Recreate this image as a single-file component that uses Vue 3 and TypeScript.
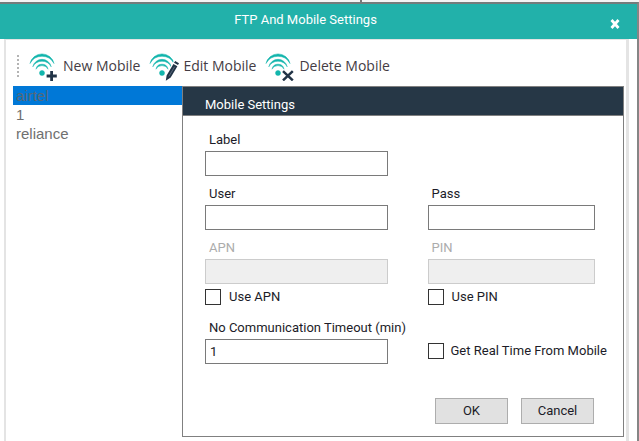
<script setup lang="ts">
import { ref } from 'vue'

type Badge = 'add' | 'edit' | 'remove'

const actions: { label: string; badge: Badge }[] = [
  { label: 'New Mobile', badge: 'add' },
  { label: 'Edit Mobile', badge: 'edit' },
  { label: 'Delete Mobile', badge: 'remove' },
]

const mobiles: string[] = ['airtel', '1', 'reliance']
const selected = ref<string>('airtel')

const label = ref('')
const user = ref('')
const pass = ref('')
const apn = ref('')
const pin = ref('')
const useApn = ref(false)
const usePin = ref(false)
const timeout = ref('1')
const realTime = ref(false)
</script>

<template>
  <div class="backdrop"><span class="tick"></span></div>
  <main class="window">
    <header class="titlebar">
      <h1>FTP And Mobile Settings</h1>
      <button class="close" type="button" aria-label="Close">
        <svg viewBox="0 0 10 10" width="10" height="10">
          <path d="M1.5 1L8.5 9M8.5 1L1.5 9" stroke="#fff" stroke-width="2.8" />
        </svg>
      </button>
    </header>

    <div class="panel">
      <nav class="toolbar">
        <svg class="grip" viewBox="0 0 2 24" width="2" height="24" aria-hidden="true">
          <path d="M1 1V24" stroke="#b4b4b4" stroke-width="2" stroke-dasharray="2 2" />
        </svg>
        <button v-for="a in actions" :key="a.badge" class="tool" type="button">
          <svg viewBox="0 0 30 30" width="30" height="30" fill="none" aria-hidden="true">
            <g fill="#12b5ac" stroke="#12b5ac" stroke-width=".5">
              <path d="M1 12.5A12.3 12.3 0 0 1 25 12.5A13.6 13.6 0 0 0 1 12.5Z" />
              <path d="M3.8 15.8A9.4 9.4 0 0 1 22.2 15.8A10.4 10.4 0 0 0 3.8 15.8Z" />
              <path d="M7 18.2A6.1 6.1 0 0 1 19 18.2A6.8 6.8 0 0 0 7 18.2Z" />
              <circle cx="13" cy="22" r="2.5" />
            </g>
            <path v-if="a.badge === 'add'" d="M22.6 20V30M17.6 25H27.8" stroke="#223447" stroke-width="2.8" />
            <g v-else-if="a.badge === 'edit'">
              <path d="M25.2 11.6L29.2 13.8L21.8 27L17.2 29.8L17.5 24.8Z" fill="#fff" stroke="#fff" stroke-width="2" />
              <path d="M24.4 13L28.4 15.2L21.7 26.6L16.8 29.8L17.6 24.4ZM25 11.8L26.2 10L30 12.2L29 14.1Z" fill="#223447" />
              <path d="M19.8 25.4L25.6 15.8" stroke="#718091" stroke-width=".7" />
            </g>
            <path v-else d="M18 20.2L27.8 29.4M27.8 20.2L18 29.4" stroke="#223447" stroke-width="2.5" />
          </svg>
          <span>{{ a.label }}</span>
        </button>
      </nav>

      <div class="content">
        <ul class="list" role="listbox" aria-label="Mobiles">
          <li
            v-for="m in mobiles"
            :key="m"
            role="option"
            :aria-selected="m === selected"
            :class="{ active: m === selected }"
            @click="selected = m"
          >{{ m }}</li>
        </ul>

        <section class="dialog" role="dialog" aria-labelledby="dialog-title">
          <h2 id="dialog-title">Mobile Settings</h2>
          <form class="form" @submit.prevent>
            <div class="field">
              <label for="label">Label</label>
              <input id="label" v-model="label" type="text" />
            </div>
            <div class="field second-row">
              <label for="user">User</label>
              <input id="user" v-model="user" type="text" />
            </div>
            <div class="field">
              <label for="pass">Pass</label>
              <input id="pass" v-model="pass" type="password" />
            </div>
            <div class="field">
              <label for="apn" :class="{ off: !useApn }">APN</label>
              <input id="apn" v-model="apn" type="text" :disabled="!useApn" />
              <label class="check"><input v-model="useApn" type="checkbox" />Use APN</label>
            </div>
            <div class="field">
              <label for="pin" :class="{ off: !usePin }">PIN</label>
              <input id="pin" v-model="pin" type="text" :disabled="!usePin" />
              <label class="check"><input v-model="usePin" type="checkbox" />Use PIN</label>
            </div>
            <div class="field timeout">
              <label for="timeout">No Communication Timeout (min)</label>
              <input id="timeout" v-model="timeout" type="text" />
            </div>
            <label class="check realtime"><input v-model="realTime" type="checkbox" />Get Real Time From Mobile</label>
            <div class="buttons">
              <button type="submit">OK</button>
              <button type="button">Cancel</button>
            </div>
          </form>
        </section>
      </div>
    </div>
  </main>
</template>

<style>
body {
  margin: 0;
  background: #fff;
}
#app {
  display: flex;
  flex-direction: column;
  height: 100vh;
  overflow: hidden;
}
</style>

<style scoped>
* {
  box-sizing: border-box;
}
h1,
h2,
ul {
  margin: 0;
  padding: 0;
  font-weight: 400;
}
button,
input {
  font: inherit;
  color: inherit;
  margin: 0;
}
.backdrop {
  display: flex;
  justify-content: center;
  flex: none;
  height: 2px;
  background: #f4f4f4;
}
.tick {
  width: 2px;
  margin-left: 82px;
  background: #777;
}
.window {
  flex: 1;
  display: flex;
  flex-direction: column;
  min-height: 0;
  border-top: 2px solid #747c7c;
  border-right: 2px solid #858585;
  font: 13px/18px Roboto, "Liberation Sans", sans-serif;
  color: #1c1c28;
}
.titlebar {
  display: grid;
  grid-template-columns: 1fr 24px;
  flex: none;
  height: 35px;
  padding: 0 10px 0 8px;
  background: #22b1aa;
  color: #fff;
}
.titlebar h1 {
  padding-top: 7px;
  font-size: 13px;
  line-height: 18px;
  text-align: center;
}
.close {
  display: flex;
  align-items: center;
  justify-content: center;
  height: 40px;
  padding: 0;
  border: 0;
  background: none;
}
.panel {
  flex: 1;
  display: flex;
  flex-direction: column;
  min-height: 0;
  margin: 0 8px 0 4px;
  border: solid #e4e4e4;
  border-width: 1px 3px 0 2px;
}
.toolbar {
  display: flex;
  align-items: center;
  flex: none;
  height: 46px;
  padding: 5px 0 0 11px;
  font-family: "Open Sans", "Noto Sans", sans-serif;
  font-size: 14px;
  color: #443c44;
}
.grip {
  margin-right: 10px;
}
.tool {
  display: flex;
  align-items: center;
  gap: 4px;
  margin-right: 9px;
  padding: 0;
  border: 0;
  background: none;
  white-space: nowrap;
}
.content {
  flex: 1;
  position: relative;
  padding-left: 7px;
}
.list {
  width: 172px;
  list-style: none;
  font: 15px/19px "Liberation Sans", Arial, sans-serif;
  color: #707070;
}
.list li {
  height: 19px;
  padding-left: 3px;
}
.list .active {
  background: #0078d7;
  color: #566878;
}
.dialog {
  position: absolute;
  top: 0;
  left: 176px;
  right: 2px;
  border: 1px solid #808080;
  background: #fff;
}
.dialog h2 {
  height: 29px;
  padding: 0 22px;
  border-bottom: 1px solid #808080;
  background: #263746;
  color: #fff;
  font-size: 13px;
  line-height: 35px;
}
.form {
  display: grid;
  grid-template-columns: minmax(0, 182fr) minmax(0, 167fr);
  column-gap: 40px;
  row-gap: 7px;
  padding: 13px 28px 12px 22px;
}
.field {
  display: flex;
  flex-direction: column;
  min-width: 0;
}
.second-row {
  grid-column: 1;
}
.field > label:first-child {
  height: 22px;
  padding-left: 4px;
  line-height: 22px;
  white-space: nowrap;
}
.field > .off {
  color: #acacac;
}
.field > input {
  width: 100%;
  height: 25px;
  padding: 0 4px;
  border: 1px solid #7a7a7a;
  border-radius: 0;
  background: #fff;
}
.field > input:disabled {
  border-color: #ccc;
  background: #efefef;
}
.check {
  display: flex;
  align-items: center;
  gap: 8px;
  height: 16px;
  white-space: nowrap;
}
.field > .check {
  margin-top: 5px;
}
.check input {
  appearance: none;
  flex: none;
  width: 16px;
  height: 16px;
  border: 1px solid #333;
  background: #fff;
}
.check input:checked {
  background: #333;
  box-shadow: inset 0 0 0 3px #fff;
}
.timeout {
  padding-top: 5px;
}
.realtime {
  align-self: end;
  margin-bottom: 5px;
  gap: 7px;
}
.buttons {
  grid-column: 2;
  display: flex;
  justify-content: flex-end;
  gap: 13px;
  padding: 27px 1px 0 0;
}
.buttons button {
  width: 73px;
  height: 26px;
  padding: 0;
  border: 1px solid #adadad;
  background: #e1e1e1;
}
</style>
